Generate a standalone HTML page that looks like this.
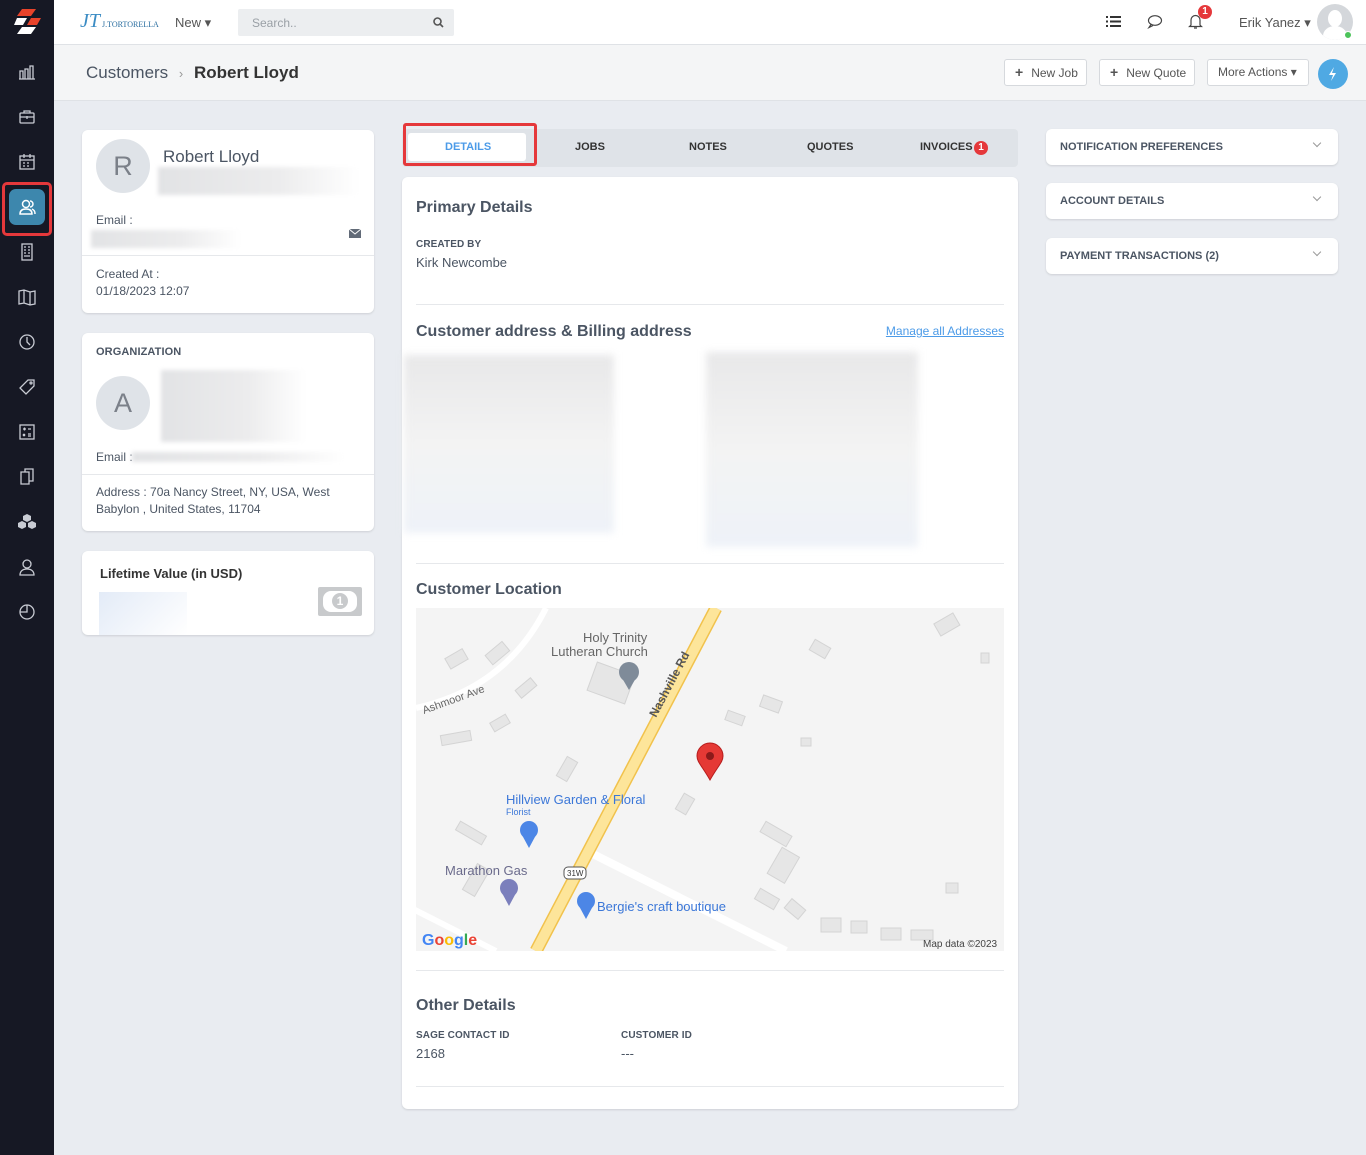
<!DOCTYPE html>
<html><head><meta charset="utf-8">
<style>
*{box-sizing:border-box;margin:0;padding:0}
body{width:1366px;height:1155px;background:#e9ecf1;font-family:"Liberation Sans",Arial,sans-serif;color:#4b5563;position:relative;overflow:hidden}
.side{position:absolute;left:0;top:0;width:54px;height:1155px;background:#161824}
.side .ic{position:absolute;left:17px;width:20px;height:20px;color:#c9ccd4}
.top{position:absolute;left:54px;top:0;right:0;height:45px;background:#fff;border-bottom:1px solid #dfe2e6}
.sub{position:absolute;left:54px;top:45px;right:0;height:56px;background:#f4f5f6;border-bottom:1px solid #dfe2e6}
.card{position:absolute;background:#fff;border-radius:6px;box-shadow:0 1px 2px rgba(0,0,0,.12)}
.btn{position:absolute;top:59px;height:27px;border:1px solid #d6d9dd;border-radius:3px;background:#fff;font-size:12px;color:#555;line-height:25px;padding-left:10px}
.blur{position:absolute;background:linear-gradient(90deg,#e2e3e5,#ececed 60%,#fff);filter:blur(2px)}
.lbl{font-size:10px;font-weight:bold;color:#4b5563;letter-spacing:.1px}
.h{font-size:16px;font-weight:bold;color:#4b5563;position:absolute}
.acc{position:absolute;left:1046px;width:292px;height:36px;background:#fff;border-radius:6px;box-shadow:0 1px 2px rgba(0,0,0,.12);font-size:11px;font-weight:bold;color:#4b5563;padding:12px 0 0 14px}
.acc:after{content:"";position:absolute;right:18px;top:11px;width:5px;height:5px;border-right:1px solid #999;border-bottom:1px solid #999;transform:rotate(45deg)}
.av{position:absolute;width:54px;height:54px;border-radius:50%;background:#dfe3e8;color:#7b8089;font-size:27px;text-align:center;line-height:54px}
</style></head><body>
<div class="side">
 <svg style="position:absolute;left:14px;top:8px" width="28" height="28" viewBox="0 0 28 28"><path d="M8 1h14l-5 7H3z" fill="#e8432a"/><path d="M3 10h10l-4 7H0z" fill="#fff"/><path d="M17 10h10l-4 7H13z" fill="#e8432a"/><path d="M8 19h14l-5 7H3z" fill="#fff"/></svg>
 <svg class="ic" style="top:62px" viewBox="0 0 20 20" fill="none" stroke="#c9ccd4" stroke-width="1.3"><path d="M3 17V9h3v8M8 17V7h3v10M13 17V4h3v13M2 17h16"/></svg>
 <svg class="ic" style="top:107px" viewBox="0 0 20 20" fill="none" stroke="#c9ccd4" stroke-width="1.3"><rect x="3" y="6" width="14" height="10" rx="1"/><path d="M7 6V4h6v2M3 10h14M10 9v3"/></svg>
 <svg class="ic" style="top:152px" viewBox="0 0 20 20" fill="none" stroke="#c9ccd4" stroke-width="1.3"><rect x="3" y="4" width="14" height="13"/><path d="M3 8h14M7 2v4M13 2v4M6 11h2M10 11h2M6 14h2M10 14h2"/></svg>
 <div style="position:absolute;left:2px;top:182px;width:50px;height:54px;border:3px solid #e5383b;border-radius:5px"></div>
 <div style="position:absolute;left:9px;top:189px;width:36px;height:36px;border-radius:7px;background:#3d87ad"></div>
 <svg class="ic" style="top:197px" viewBox="0 0 20 20" fill="none" stroke="#fff" stroke-width="1.5"><circle cx="9" cy="7" r="3.5"/><path d="M3 17c0-4 3-5 6-5s6 1 6 5z"/><path d="M13 4a3 3 0 0 1 0 6M15 12c2 1 3 2 3 5"/></svg>
 <svg class="ic" style="top:242px" viewBox="0 0 20 20" fill="none" stroke="#c9ccd4" stroke-width="1.3"><rect x="5" y="2" width="10" height="16"/><path d="M7 5h2M11 5h2M7 8h2M11 8h2M7 11h2M11 11h2M7 14h6"/></svg>
 <svg class="ic" style="top:287px" viewBox="0 0 20 20" fill="none" stroke="#c9ccd4" stroke-width="1.3"><path d="M2 4l5-1 6 2 5-1v13l-5 1-6-2-5 1zM7 3v13M13 5v13"/></svg>
 <svg class="ic" style="top:332px" viewBox="0 0 20 20" fill="none" stroke="#c9ccd4" stroke-width="1.3"><circle cx="10" cy="10" r="7"/><path d="M10 5v5l3 3"/></svg>
 <svg class="ic" style="top:377px" viewBox="0 0 20 20" fill="none" stroke="#c9ccd4" stroke-width="1.3"><path d="M11 3h6v6l-8 8-6-6z"/><circle cx="14" cy="6" r="1"/></svg>
 <svg class="ic" style="top:422px" viewBox="0 0 20 20" fill="none" stroke="#c9ccd4" stroke-width="1.3"><rect x="3" y="3" width="14" height="14"/><path d="M6 7h3M7.5 5.5v3M11 7h3M6 12l2 2M8 12l-2 2M11 12h3M11 14h3"/></svg>
 <svg class="ic" style="top:467px" viewBox="0 0 20 20" fill="none" stroke="#c9ccd4" stroke-width="1.3"><path d="M4 5h8v12H4zM8 5V2h8v12h-4"/></svg>
 <svg class="ic" style="top:512px" viewBox="0 0 20 20" fill="#c9ccd4"><path d="M10 2l4 2v4l-4 2-4-2V4zM5 9l4 2v4l-4 2-4-2v-4zM15 9l4 2v4l-4 2-4-2v-4z"/></svg>
 <svg class="ic" style="top:557px" viewBox="0 0 20 20" fill="none" stroke="#c9ccd4" stroke-width="1.3"><circle cx="10" cy="7" r="4"/><path d="M3 18c0-4 3-6 7-6s7 2 7 6z"/></svg>
 <svg class="ic" style="top:602px" viewBox="0 0 20 20" fill="none" stroke="#c9ccd4" stroke-width="1.3"><circle cx="10" cy="10" r="7"/><path d="M10 3v7H3"/></svg>
</div>

<div class="top">
 <div style="position:absolute;left:26px;top:10px;font-size:8px;color:#2a6ea0;font-family:'Liberation Serif',serif"><span style="font-size:20px;font-style:italic;color:#3b8cc4">JT</span> J.TORTORELLA</div>
 <div style="position:absolute;left:121px;top:15px;font-size:13px;color:#555">New ▾</div>
 <div style="position:absolute;left:184px;top:9px;width:216px;height:27px;background:#eceef0;border-radius:2px;font-size:12px;color:#9aa0a6;padding:7px 14px">Search..
  <svg style="position:absolute;right:10px;top:8px" width="11" height="11" viewBox="0 0 11 11" fill="none" stroke="#555" stroke-width="1.6"><circle cx="4.5" cy="4.5" r="3.5"/><path d="M7 7l3 3"/></svg></div>
 <svg style="position:absolute;left:1052px;top:15px" width="15" height="13" viewBox="0 0 15 13" fill="#333"><rect x="0" y="1" width="2" height="2"/><rect x="4" y="1" width="11" height="2"/><rect x="0" y="5.5" width="2" height="2"/><rect x="4" y="5.5" width="11" height="2"/><rect x="0" y="10" width="2" height="2"/><rect x="4" y="10" width="11" height="2"/></svg>
 <svg style="position:absolute;left:1093px;top:14px" width="16" height="15" viewBox="0 0 16 15" fill="none" stroke="#444" stroke-width="1.2"><ellipse cx="8" cy="6.5" rx="6.5" ry="4.8"/><path d="M4 10.5l-2 3 4-2"/></svg>
 <svg style="position:absolute;left:1134px;top:13px" width="15" height="16" viewBox="0 0 15 16" fill="none" stroke="#444" stroke-width="1.2"><path d="M3 12V7a4.5 4.5 0 0 1 9 0v5l1.5 1.5h-12zM6 15h3"/></svg>
 <div style="position:absolute;left:1144px;top:5px;width:14px;height:14px;border-radius:50%;background:#e5383b;color:#fff;font-size:10px;font-weight:bold;text-align:center;line-height:14px">1</div>
 <div style="position:absolute;left:1185px;top:15px;font-size:13px;color:#555">Erik Yanez ▾</div>
 <div style="position:absolute;left:1263px;top:4px;width:36px;height:36px;border-radius:50%;background:#d4d7db;overflow:hidden"><div style="position:absolute;left:11px;top:6px;width:14px;height:17px;border-radius:50%;background:#fff"></div><div style="position:absolute;left:6px;top:22px;width:24px;height:20px;border-radius:50% 50% 0 0;background:#fff"></div></div>
 <div style="position:absolute;left:1290px;top:31px;width:8px;height:8px;border-radius:50%;background:#4cc35a;border:1px solid #fff"></div>
</div>

<div class="sub">
 <div style="position:absolute;left:32px;top:18px;font-size:17px;color:#4b5563">Customers <span style="color:#999;font-size:13px;margin:0 6px">›</span> <b style="color:#333">Robert Lloyd</b></div>
</div>
<div class="btn" style="left:1004px;width:83px"><b style="font-size:14px;margin-right:8px">+</b>New Job</div>
<div class="btn" style="left:1099px;width:96px"><b style="font-size:14px;margin-right:8px">+</b>New Quote</div>
<div class="btn" style="left:1207px;width:102px">More Actions ▾</div>
<div style="position:absolute;left:1318px;top:59px;width:30px;height:30px;border-radius:50%;background:#4fa9e3"><svg width="30" height="30" viewBox="0 0 30 30"><path d="M16 8l-5 8h4l-2 6 5-8h-4z" fill="#fff"/></svg></div>

<div class="card" style="left:82px;top:130px;width:292px;height:183px">
 <div class="av" style="left:14px;top:9px">R</div>
 <div style="position:absolute;left:81px;top:17px;font-size:17px;color:#4b5563">Robert Lloyd</div>
 <div class="blur" style="left:76px;top:37px;width:201px;height:28px"></div>
 <div style="position:absolute;left:14px;top:83px;font-size:12px">Email :</div>
 <div class="blur" style="left:9px;top:100px;width:150px;height:18px"></div>
 <svg style="position:absolute;left:267px;top:99px" width="12" height="9" viewBox="0 0 12 9"><rect width="12" height="9" fill="#626b78"/><path d="M0 0l6 5 6-5" stroke="#fff" fill="none"/></svg>
 <div style="position:absolute;left:0;right:0;top:125px;border-top:1px solid #e6e8eb"></div>
 <div style="position:absolute;left:14px;top:136px;font-size:12px;line-height:17px">Created At :<br>01/18/2023 12:07</div>
</div>
<div class="card" style="left:82px;top:333px;width:292px;height:198px">
 <div class="lbl" style="position:absolute;left:14px;top:13px;font-size:11px">ORGANIZATION</div>
 <div class="av" style="left:14px;top:43px">A</div>
 <div class="blur" style="left:79px;top:37px;width:145px;height:72px"></div>
 <div style="position:absolute;left:14px;top:117px;font-size:12px">Email :</div>
 <div class="blur" style="left:50px;top:119px;width:212px;height:10px"></div>
 <div style="position:absolute;left:0;right:0;top:141px;border-top:1px solid #e6e8eb"></div>
 <div style="position:absolute;left:14px;top:151px;font-size:12px;line-height:17px;width:270px">Address : 70a Nancy Street, NY, USA, West Babylon , United States, 11704</div>
</div>
<div class="card" style="left:82px;top:551px;width:292px;height:84px">
 <div style="position:absolute;left:18px;top:15px;font-size:13px;font-weight:bold;color:#333">Lifetime Value (in USD)</div>
 <div style="position:absolute;left:17px;top:41px;width:88px;height:43px;background:linear-gradient(135deg,#e3ebf7,#fff)"></div>
 <div style="position:absolute;left:236px;top:36px;width:44px;height:29px;background:#c8cacc;border-radius:2px"><div style="position:absolute;left:5px;top:4px;width:34px;height:21px;background:#fff;border-radius:8px"></div><div style="position:absolute;left:14px;top:6px;width:16px;height:16px;border-radius:50%;background:#c8cacc;color:#fff;font-size:12px;font-weight:bold;text-align:center;line-height:16px">1</div></div>
</div>

<div style="position:absolute;left:402px;top:129px;width:616px;height:38px;background:#dfe3e8;border-radius:4px"></div>
<div style="position:absolute;left:408px;top:133px;width:118px;height:28px;background:#fff;border-radius:3px"></div>
<div style="position:absolute;left:403px;top:123px;width:134px;height:43px;border:3px solid #e5383b;border-radius:3px"></div>
<div style="position:absolute;top:141px;font-size:11px;font-weight:bold;color:#333;left:0;width:1366px">
 <span style="position:absolute;left:445px;color:#4c9be8">DETAILS</span>
 <span style="position:absolute;left:575px">JOBS</span>
 <span style="position:absolute;left:689px">NOTES</span>
 <span style="position:absolute;left:807px">QUOTES</span>
 <span style="position:absolute;left:920px">INVOICES</span>
 <span style="position:absolute;left:974px;top:0;width:14px;height:14px;border-radius:50%;background:#e5383b;color:#fff;font-size:10px;text-align:center;line-height:14px">1</span>
</div>

<div class="card" style="left:402px;top:177px;width:616px;height:932px">
 <div class="h" style="left:14px;top:22px">Primary Details</div>
 <div class="lbl" style="position:absolute;left:14px;top:62px">CREATED BY</div>
 <div style="position:absolute;left:14px;top:78px;font-size:13px">Kirk Newcombe</div>
 <div style="position:absolute;left:14px;right:14px;top:127px;border-top:1px solid #e6e8eb"></div>
 <div class="h" style="left:14px;top:146px">Customer address &amp; Billing address</div>
 <div style="position:absolute;right:14px;top:147px;font-size:12px;color:#4c9be8;text-decoration:underline">Manage all Addresses</div>
 <div class="blur" style="left:2px;top:178px;width:210px;height:178px;background:linear-gradient(180deg,#e8e8e9,#f3f3f3 50%,#eef2f8);filter:blur(4px)"></div>
 <div class="blur" style="left:304px;top:175px;width:212px;height:195px;background:linear-gradient(180deg,#e8e8e9,#f3f3f3 50%,#eef2f8);filter:blur(4px)"></div>
 <div style="position:absolute;left:14px;right:14px;top:386px;border-top:1px solid #e6e8eb"></div>
 <div class="h" style="left:14px;top:404px">Customer Location</div>
 <svg style="position:absolute;left:14px;top:431px" width="588" height="343" viewBox="0 0 588 343" font-family="Liberation Sans,Arial,sans-serif">
  <rect width="588" height="343" fill="#f4f4f4"/>
  <path d="M0 100 Q90 80 130 0" stroke="#fff" stroke-width="6" fill="none"/>
  <path d="M-5 300 L80 343" stroke="#fff" stroke-width="6"/>
  <path d="M175 245 L370 343" stroke="#fff" stroke-width="8"/>
  <g fill="#e6e6e6" stroke="#d4d4d4">
   <rect x="30" y="45" width="20" height="12" transform="rotate(-30 40 50)"/><rect x="70" y="40" width="22" height="12" transform="rotate(-40 80 45)"/>
   <rect x="175" y="60" width="40" height="30" transform="rotate(20 195 75)"/><rect x="395" y="35" width="18" height="12" transform="rotate(30 404 41)"/>
   <rect x="520" y="10" width="22" height="14" transform="rotate(-30 530 17)"/><rect x="345" y="90" width="20" height="12" transform="rotate(20 355 96)"/>
   <rect x="310" y="105" width="18" height="10" transform="rotate(20 319 110)"/><rect x="25" y="125" width="30" height="10" transform="rotate(-10 40 130)"/>
   <rect x="75" y="110" width="18" height="10" transform="rotate(-30 84 115)"/><rect x="100" y="75" width="20" height="10" transform="rotate(-40 110 80)"/>
   <rect x="140" y="155" width="22" height="12" transform="rotate(-60 151 161)"/><rect x="40" y="220" width="30" height="10" transform="rotate(30 55 225)"/>
   <rect x="345" y="220" width="30" height="12" transform="rotate(30 360 226)"/><rect x="345" y="220" width="30" height="20" transform="rotate(-60 360 230) translate(-20,20)"/>
   <rect x="260" y="190" width="18" height="12" transform="rotate(-60 269 196)"/><rect x="45" y="265" width="30" height="14" transform="rotate(-60 60 272)"/>
   <rect x="340" y="285" width="22" height="12" transform="rotate(30 351 291)"/><rect x="370" y="295" width="18" height="12" transform="rotate(40 379 301)"/>
   <rect x="405" y="310" width="20" height="14"/><rect x="435" y="313" width="16" height="12"/><rect x="465" y="320" width="20" height="12"/><rect x="495" y="322" width="22" height="10"/>
   <rect x="530" y="275" width="12" height="10"/><rect x="385" y="130" width="10" height="8"/><rect x="565" y="45" width="8" height="10"/>
  </g>
  <path d="M120 343 L300 0" stroke="#f1c24c" stroke-width="13"/>
  <path d="M120 343 L300 0" stroke="#fde59a" stroke-width="10"/>
  <text x="167" y="34" font-size="13" fill="#666">Holy Trinity</text>
  <text x="135" y="48" font-size="13" fill="#666">Lutheran Church</text>
  <text x="8" y="106" font-size="11" fill="#666" transform="rotate(-20 8 106)">Ashmoor Ave</text>
  <text x="240" y="110" font-size="12" font-weight="bold" fill="#555" transform="rotate(-62 240 110)">Nashville Rd</text>
  <text x="90" y="196" font-size="13" fill="#3b77d8">Hillview Garden &amp; Floral</text>
  <text x="90" y="207" font-size="9" fill="#3b77d8">Florist</text>
  <text x="29" y="267" font-size="13" fill="#6b6b8c">Marathon Gas</text>
  <text x="181" y="303" font-size="13" fill="#3b77d8">Bergie's craft boutique</text>
  <rect x="148" y="259" width="22" height="12" rx="4" fill="#fff" stroke="#555"/><text x="151" y="268" font-size="8" fill="#333">31W</text>
  <circle cx="213" cy="64" r="10" fill="#7f8b99"/><path d="M206 70l7 12 7-12z" fill="#7f8b99"/>
  <circle cx="113" cy="222" r="9" fill="#4c86e6"/><path d="M106 227l7 13 7-13z" fill="#4c86e6"/>
  <circle cx="93" cy="280" r="9" fill="#7b7fbc"/><path d="M86 285l7 13 7-13z" fill="#7b7fbc"/>
  <circle cx="170" cy="293" r="9" fill="#4c86e6"/><path d="M163 298l7 13 7-13z" fill="#4c86e6"/>
  <path d="M294 172c-8-14-13-18-13-24a13 13 0 0 1 26 0c0 6-5 10-13 24z" fill="#e53935" stroke="#b71c1c"/>
  <circle cx="294" cy="148" r="4" fill="#8b1a1a"/>
  <text x="6" y="337" font-size="16" font-weight="bold"><tspan fill="#4285f4">G</tspan><tspan fill="#ea4335">o</tspan><tspan fill="#fbbc05">o</tspan><tspan fill="#4285f4">g</tspan><tspan fill="#34a853">l</tspan><tspan fill="#ea4335">e</tspan></text>
  <text x="507" y="339" font-size="10" fill="#444">Map data ©2023</text>
 </svg>
 <div style="position:absolute;left:14px;right:14px;top:793px;border-top:1px solid #e6e8eb"></div>
 <div class="h" style="left:14px;top:820px">Other Details</div>
 <div class="lbl" style="position:absolute;left:14px;top:853px">SAGE CONTACT ID</div>
 <div style="position:absolute;left:14px;top:869px;font-size:13px">2168</div>
 <div class="lbl" style="position:absolute;left:219px;top:853px">CUSTOMER ID</div>
 <div style="position:absolute;left:219px;top:869px;font-size:13px">---</div>
 <div style="position:absolute;left:14px;right:14px;top:909px;border-top:1px solid #e6e8eb"></div>
</div>

<div class="acc" style="top:129px">NOTIFICATION PREFERENCES</div>
<div class="acc" style="top:183px">ACCOUNT DETAILS</div>
<div class="acc" style="top:238px">PAYMENT TRANSACTIONS (2)</div>
</body></html>
